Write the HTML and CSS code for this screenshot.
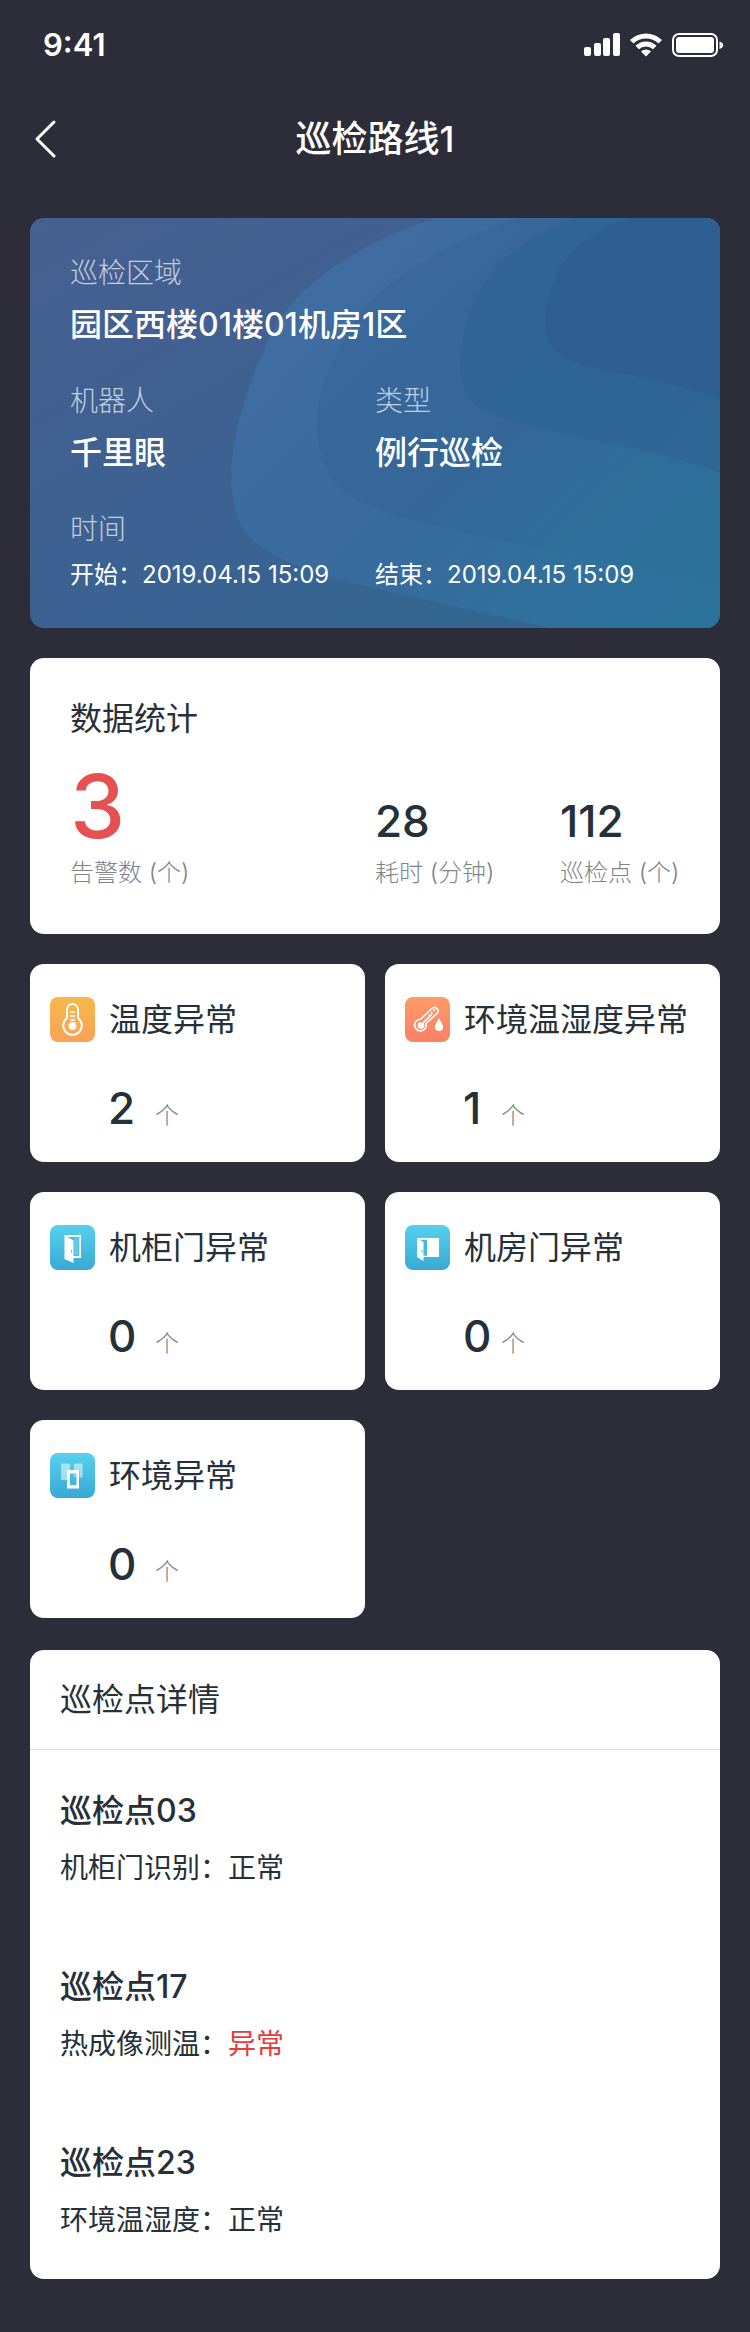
FILE: index.html
```html
<!DOCTYPE html>
<html lang="zh-CN">
<head>
<meta charset="utf-8">
<meta name="viewport" content="width=device-width, initial-scale=1">
<title>巡检路线1</title>
<link rel="stylesheet" href="styles.css">
</head>
<body>
<div class="status-bar">
  <span class="status-time">9:41</span>
  <svg class="status-icons" width="140" height="24" viewBox="0 0 140 24" fill="#fff" aria-hidden="true">
    <rect x="0" y="14" width="7" height="9" rx="2"/>
    <rect x="10" y="10" width="7" height="13" rx="2"/>
    <rect x="19" y="5" width="7" height="18" rx="2"/>
    <rect x="29" y="0" width="7" height="23" rx="2"/>
    <path d="M46 7a23 23 0 0 1 32 0l-3.500 3.600a18 18 0 0 0-25 0z"/>
    <path d="M51.500 12.800a15 15 0 0 1 21 0l-3.500 3.500a10 10 0 0 0-14 0z"/>
    <path d="M57 18.400a7.500 7.500 0 0 1 10 0l-5 5z"/>
    <rect x="89" y="1" width="44" height="22" rx="6" fill="none" stroke="#fff" stroke-width="2"/>
    <rect x="92" y="4" width="38" height="16" rx="3"/>
    <path d="M135.500 8.500c5 1.500 5 6 0 7.500z"/>
  </svg>
</div>
<header class="nav-bar">
  <button class="back" type="button" aria-label="返回">
    <svg width="24" height="40" viewBox="0 0 24 40" fill="none" stroke="#fff" stroke-width="3" stroke-linecap="round" stroke-linejoin="round"><path d="M20 3 3 20l17 17"/></svg>
  </button>
  <h1 class="nav-title">巡检路线1</h1>
</header>
<main class="content">
  <section class="route-card">
    <svg class="route-waves" viewBox="0 0 690 410" preserveAspectRatio="none" aria-hidden="true">
      <defs>
        <linearGradient id="wave1" gradientUnits="userSpaceOnUse" x1="250" y1="60" x2="620" y2="410"><stop offset="0" stop-color="#416da2"/><stop offset=".5" stop-color="#386b9d"/><stop offset="1" stop-color="#2c739c"/></linearGradient>
        <linearGradient id="wave2" gradientUnits="userSpaceOnUse" x1="320" y1="80" x2="600" y2="390"><stop offset="0" stop-color="#3a689c"/><stop offset=".5" stop-color="#346798"/><stop offset="1" stop-color="#2b729b"/></linearGradient>
        <linearGradient id="wave3" gradientUnits="userSpaceOnUse" x1="440" y1="60" x2="640" y2="240"><stop offset="0" stop-color="#316397"/><stop offset="1" stop-color="#2e6695"/></linearGradient>
      </defs>
      <path fill="url(#wave1)" d="M405 0C340 22 285 55 257 92C236 118 220 165 210 198C200 236 198 274 208 300C220 332 262 346 300 360L520 410H690V0z"/>
      <path fill="url(#wave2)" d="M487 0C410 30 350 60 322 110C300 142 286 174 287 210C290 260 310 280 365 297C460 323 570 340 690 370V0z"/>
      <path fill="url(#wave3)" d="M544 0C480 24 450 62 440 94C426 134 424 178 453 192C510 218 610 225 690 255V0z"/>
      <path fill="#2d5f93" d="M601 0C555 14 529 44 522 68C513 97 512 120 527 135C552 156 625 154 690 182V0z"/>
    </svg>
    <dl class="route-info">
      <div class="field field-wide"><dt>巡检区域</dt><dd>园区西楼01楼01机房1区</dd></div>
      <div class="field"><dt>机器人</dt><dd>千里眼</dd></div>
      <div class="field"><dt>类型</dt><dd>例行巡检</dd></div>
      <div class="field field-wide field-time"><dt>时间</dt><dd>开始：2019.04.15 15:09</dd><dd>结束：2019.04.15 15:09</dd></div>
    </dl>
  </section>

  <section class="card stats">
    <h2 class="card-title">数据统计</h2>
    <dl class="stats-row">
      <div class="stat"><dd class="stat-alert">3</dd><dt>告警数 (个)</dt></div>
      <div class="stat"><dd>28</dd><dt>耗时 (分钟)</dt></div>
      <div class="stat"><dd>112</dd><dt>巡检点 (个)</dt></div>
    </dl>
  </section>

  <section class="tiles">
    <article class="card tile">
      <div class="tile-head">
        <svg class="tile-icon" viewBox="0 0 45 45" aria-hidden="true">
          <defs><linearGradient id="amber" x1="0" y1="0" x2="0" y2="1"><stop offset="0" stop-color="#f7b84c"/><stop offset="1" stop-color="#f9a257"/></linearGradient></defs>
          <rect width="45" height="45" rx="8" fill="url(#amber)"/>
          <path d="M17 12.500a5.500 5.500 0 0 1 11 0V21a9.300 9.300 0 1 1-11 0z" fill="none" stroke="#fff" stroke-width="2"/>
          <path d="M20 15h5M20 19h5M20 23h5" stroke="#fff" stroke-width="1.600"/>
          <circle cx="22.500" cy="29" r="3.900" fill="#fff"/>
        </svg>
        <h2 class="card-title">温度异常</h2>
      </div>
      <p class="tile-count"><strong>2</strong><span>个</span></p>
    </article>
    <article class="card tile">
      <div class="tile-head">
        <svg class="tile-icon" viewBox="0 0 45 45" aria-hidden="true">
          <defs><linearGradient id="coral" x1="0" y1="0" x2="0" y2="1"><stop offset="0" stop-color="#ff9b66"/><stop offset="1" stop-color="#fb8066"/></linearGradient></defs>
          <rect width="45" height="45" rx="8" fill="url(#coral)"/>
          <path d="M27 11.500a3.600 3.600 0 0 1 5.600 4.400L21 26.500a5.800 5.800 0 1 1-5.600-4.200z" fill="none" stroke="#fff" stroke-width="1.600" stroke-linejoin="round"/>
          <path d="m18 26 9-9" stroke="#fff" stroke-width="1.600"/>
          <path d="m28.500 12.500 1.500 1.500m-4 1 1.500 1.500m-4 1 1.500 1.500" stroke="#fff" stroke-width="1.200"/>
          <circle cx="16" cy="28.500" r="3.300" fill="#fff"/>
          <path d="M34 21c2 4.500 4 6 4 9a4 4 0 0 1-8 0c0-3 2-4.500 4-9z" fill="#fff"/>
        </svg>
        <h2 class="card-title">环境温湿度异常</h2>
      </div>
      <p class="tile-count"><strong>1</strong><span>个</span></p>
    </article>
    <article class="card tile">
      <div class="tile-head">
        <svg class="tile-icon" viewBox="0 0 45 45" aria-hidden="true">
          <defs><linearGradient id="sky" x1="0" y1="0" x2="0" y2="1"><stop offset="0" stop-color="#58d0ee"/><stop offset="1" stop-color="#38a9d5"/></linearGradient></defs>
          <rect width="45" height="45" rx="8" fill="url(#sky)"/>
          <path fill="#fff" d="M14.500 10H31v23h-7.500v5L14.500 34z"/>
          <path fill="#47bce1" d="M17.500 12h11.800v19h-5.800V15.500z"/>
          <path fill="#8edcf0" d="M24.500 12.700h3.800v17.500h-3.800z" opacity=".45"/>
          <path fill="#47bce1" d="M21 25h1v2.500h-1z"/>
        </svg>
        <h2 class="card-title">机柜门异常</h2>
      </div>
      <p class="tile-count"><strong>0</strong><span>个</span></p>
    </article>
    <article class="card tile">
      <div class="tile-head">
        <svg class="tile-icon" viewBox="0 0 45 45" aria-hidden="true">
          <rect width="45" height="45" rx="8" fill="url(#sky)"/>
          <path fill="#fff" d="M12 13h22v19H18.500v4L12 32z"/>
          <path fill="#45badf" d="M14.500 14.800H22v16h-3.500V17z"/>
          <path fill="#45badf" d="M16.500 25h1v2.500h-1z"/>
        </svg>
        <h2 class="card-title">机房门异常</h2>
      </div>
      <p class="tile-count"><strong>0</strong><span>个</span></p>
    </article>
    <article class="card tile">
      <div class="tile-head">
        <svg class="tile-icon" viewBox="0 0 45 45" aria-hidden="true">
          <rect width="45" height="45" rx="8" fill="url(#sky)"/>
          <path fill="#fff" opacity=".5" d="M11 10.500h9V17h-3v10h-6zM24 10.500h8.500v14h-3V17H24z"/>
          <path fill="#fff" fill-rule="evenodd" d="M17 17h12v18.500H17zM20 20.500v11.500h6.500V20.500z"/>
          <path fill="#fff" opacity=".35" d="M23.500 20.500h3v4h-3z"/>
        </svg>
        <h2 class="card-title">环境异常</h2>
      </div>
      <p class="tile-count"><strong>0</strong><span>个</span></p>
    </article>
  </section>

  <section class="card details">
    <h2 class="card-title details-title">巡检点详情</h2>
    <ul class="points">
      <li><h3>巡检点03</h3><p>机柜门识别：正常</p></li>
      <li><h3>巡检点17</h3><p>热成像测温：<em>异常</em></p></li>
      <li><h3>巡检点23</h3><p>环境温湿度：正常</p></li>
    </ul>
  </section>
</main>
</body>
</html>
```

FILE: styles.css
```css
* {
  box-sizing: border-box;
}

body,
h1,
h2,
h3,
p,
dl,
dd,
ul {
  margin: 0;
  padding: 0;
}

body {
  background: #2d2d39;
  color: #263038;
  font-family: Inter, "Noto Sans CJK SC", sans-serif;
  font-size: 28px;
  line-height: 40px;
}

svg {
  display: block;
}

.status-bar {
  display: flex;
  align-items: center;
  justify-content: space-between;
  height: 90px;
  padding: 0 26px 0 43px;
}

.status-time {
  color: #fff;
  font-size: 31px;
  font-weight: 600;
}

.nav-bar {
  display: grid;
  grid-template-columns: 60px 1fr 60px;
  align-items: center;
  height: 98px;
  padding: 0 30px;
}

.back {
  justify-self: start;
  padding: 4px;
  border: 0;
  background: none;
  cursor: pointer;
}

.nav-title {
  color: #fff;
  font-size: 36px;
  font-weight: 500;
  text-align: center;
}

.content {
  display: flex;
  flex-direction: column;
  gap: 30px;
  padding: 30px 30px 53px;
}

.route-card {
  position: relative;
  overflow: hidden;
  padding: 35px 0 37px 40px;
  border-radius: 14px;
  background: linear-gradient(150deg, #475f91 0%, #3c6292 50%, #2d6991 100%);
  color: #fff;
}

.route-waves {
  position: absolute;
  inset: 0;
  width: 100%;
  height: 100%;
}

.route-info {
  position: relative;
  display: grid;
  grid-template-columns: calc(50% - 20px) 1fr;
  row-gap: 34px;
}

.field {
  display: grid;
  row-gap: 10px;
}

.field-wide {
  grid-column: 1 / -1;
}

.field dt {
  color: #c2cfdf;
  font-weight: 300;
}

.field dd {
  font-size: 32px;
  font-weight: 500;
  line-height: 44px;
}

.field-time {
  grid-template-columns: calc(50% - 20px) 1fr;
}

.field-time dt {
  grid-column: 1 / -1;
}

.field-time dd {
  font-size: 24px;
  font-weight: 400;
  line-height: 32px;
}

.card {
  border-radius: 14px;
  background: #fff;
}

.card-title {
  font-size: 32px;
  font-weight: 400;
  line-height: 44px;
}

.stats {
  padding: 39px 0 43px 40px;
}

.stats-row {
  display: grid;
  grid-template-columns: calc(50% - 20px) 185px 1fr;
  align-items: end;
  padding-top: 20px;
}

.stat {
  display: grid;
  row-gap: 4px;
}

.stat dd {
  font-size: 44px;
  font-weight: 500;
  line-height: 60px;
}

.stat .stat-alert {
  color: #e65050;
  font-size: 88px;
  line-height: 90px;
}

.stat dt {
  color: #7d848a;
  font-size: 24px;
  font-weight: 300;
  line-height: 36px;
}

.tiles {
  display: grid;
  grid-template-columns: 1fr 1fr;
  gap: 30px 20px;
}

.tile {
  padding: 33px 20px 24px;
}

.tile-head {
  display: flex;
  align-items: center;
  gap: 14px;
}

.tile-icon {
  flex: none;
  width: 45px;
  height: 45px;
}

.tile-count {
  display: flex;
  align-items: baseline;
  padding: 36px 0 0 58px;
}

.tile-count strong {
  min-width: 47px;
  font-size: 44px;
  font-weight: 500;
  line-height: 60px;
}

.tile:nth-child(even) .tile-count strong {
  min-width: 38px;
}

.tile-count span {
  color: #7d848a;
  font-size: 24px;
  font-weight: 300;
  line-height: 36px;
}

.details {
  margin-top: 2px;
  padding-bottom: 39px;
}

.details-title {
  padding: 28px 30px 27px;
  border-bottom: 1px solid #dcdcde;
}

.points {
  display: grid;
  row-gap: 77px;
  padding: 39px 30px 0;
  list-style: none;
}

.points li {
  display: grid;
  row-gap: 15px;
}

.points h3 {
  font-size: 32px;
  font-weight: 500;
  line-height: 44px;
}

.points em {
  color: #e83b3b;
  font-style: normal;
}
```
